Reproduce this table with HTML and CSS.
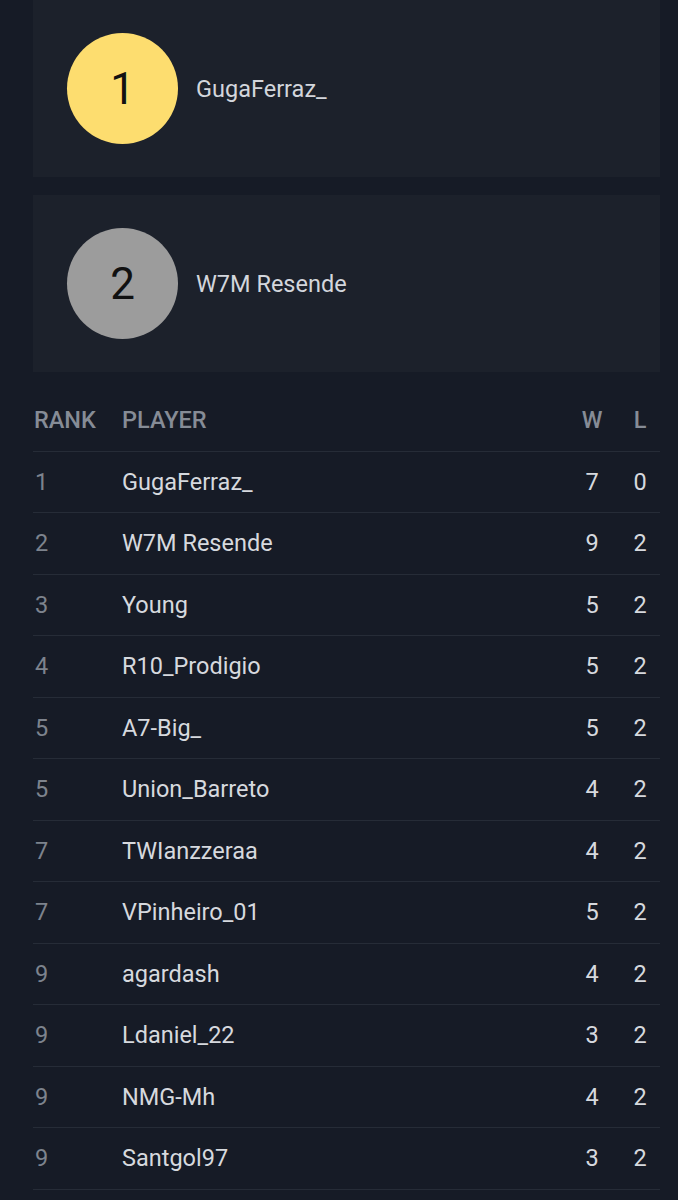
FILE: index.html
```html
<!DOCTYPE html>
<html lang="en">
<head>
    <meta charset="UTF-8">
    <meta name="viewport" content="width=device-width, initial-scale=1.0">
    <title>Ranking</title>
    <link rel="stylesheet" href="styles.css">
</head>
<body>
    <div class="container">
        <div class="podium-card">
            <div class="place gold">1</div>
            <div class="podium-name">GugaFerraz_</div>
        </div>
        <div class="podium-card">
            <div class="place silver">2</div>
            <div class="podium-name">W7M Resende</div>
        </div>

        <div class="ranking">
            <div class="row head">
                <span>Rank</span>
                <span>Player</span>
                <span class="num">W</span>
                <span class="num">L</span>
            </div>
            <div class="row"><span class="rank">1</span><span class="player">GugaFerraz_</span><span class="num">7</span><span class="num">0</span></div>
            <div class="row"><span class="rank">2</span><span class="player">W7M Resende</span><span class="num">9</span><span class="num">2</span></div>
            <div class="row"><span class="rank">3</span><span class="player">Young</span><span class="num">5</span><span class="num">2</span></div>
            <div class="row"><span class="rank">4</span><span class="player">R10_Prodigio</span><span class="num">5</span><span class="num">2</span></div>
            <div class="row"><span class="rank">5</span><span class="player">A7-Big_</span><span class="num">5</span><span class="num">2</span></div>
            <div class="row"><span class="rank">5</span><span class="player">Union_Barreto</span><span class="num">4</span><span class="num">2</span></div>
            <div class="row"><span class="rank">7</span><span class="player">TWIanzzeraa</span><span class="num">4</span><span class="num">2</span></div>
            <div class="row"><span class="rank">7</span><span class="player">VPinheiro_01</span><span class="num">5</span><span class="num">2</span></div>
            <div class="row"><span class="rank">9</span><span class="player">agardash</span><span class="num">4</span><span class="num">2</span></div>
            <div class="row"><span class="rank">9</span><span class="player">Ldaniel_22</span><span class="num">3</span><span class="num">2</span></div>
            <div class="row"><span class="rank">9</span><span class="player">NMG-Mh</span><span class="num">4</span><span class="num">2</span></div>
            <div class="row"><span class="rank">9</span><span class="player">Santgol97</span><span class="num">3</span><span class="num">2</span></div>
        </div>
    </div>
</body>
</html>
```

FILE: styles.css
```css
body {
    margin: 0;
    background-color: #161b26;
    font-family: Roboto, 'Noto Sans', sans-serif;
    color: #d6d9de;
}
.container {
    padding: 0 18px 0 33px;
}
.podium-card {
    background-color: #1c212b;
    height: 177px;
    padding: 0 34px;
    box-sizing: border-box;
    display: flex;
    align-items: center;
    gap: 18px;
    margin-bottom: 18px;
}
.place {
    width: 111px;
    height: 111px;
    border-radius: 50%;
    display: flex;
    justify-content: center;
    align-items: center;
    font-size: 44px;
    color: #111;
}
.place.gold {
    background-color: #fddd6f;
}
.place.silver {
    background-color: #9c9c9c;
}
.podium-name {
    font-size: 23.5px;
    color: #d3d6dc;
}
.ranking {
    margin-top: 17px;
}
.row {
    display: grid;
    grid-template-columns: 89px 1fr 48px 40px;
    align-items: center;
    height: 60.5px;
    border-bottom: 1px solid #262c37;
    font-size: 23.5px;
}
.row .num {
    text-align: center;
}
.row .num:nth-child(3) {
    padding-right: 8px;
}
.row .rank {
    color: #7d838d;
    padding-left: 2px;
}
.head {
    color: #868c96;
    font-weight: 500;
    text-transform: uppercase;
}
.head span:first-child {
    padding-left: 1px;
}
```
